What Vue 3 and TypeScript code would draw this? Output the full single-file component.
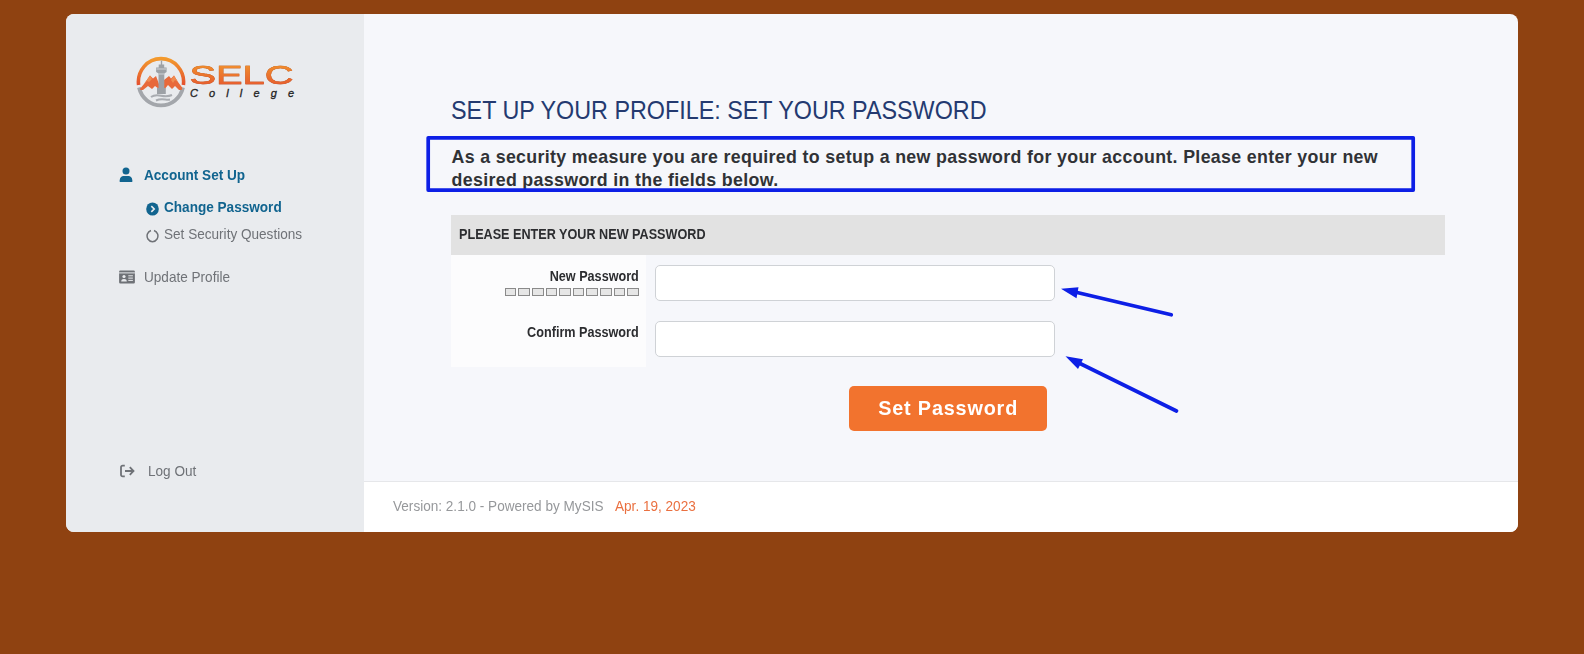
<script setup lang="ts">
import { ref } from 'vue'

const newPassword = ref('')
const confirmPassword = ref('')
const meterSegments = 10
</script>

<template>
  <div class="page">
    <div class="shell">
      <aside class="sidebar">
        <svg class="logo" viewBox="0 0 160 54" role="img" aria-label="SELC College">
          <defs>
            <linearGradient id="flame" x1="0" y1="0" x2="0" y2="1">
              <stop offset="0" stop-color="#f39a2d" />
              <stop offset="1" stop-color="#e4502f" />
            </linearGradient>
            <clipPath id="disc"><circle cx="25" cy="26.5" r="22" /></clipPath>
          </defs>
          <path d="M2.6 29A22.6 23.3 0 1 1 47.4 29" fill="none" stroke="url(#flame)" stroke-width="3.6" />
          <path d="M3 31.5A22.6 23.3 0 0 0 47 31.5" fill="none" stroke="#a3a6ab" stroke-width="3.8" />
          <g clip-path="url(#disc)">
            <path d="M3 34L8 28L14 19.5L17 22.5L20 20L23 28V33L19 30L16 33L12 30L7 34Z" fill="#e8693a" />
            <path d="M28 24L33 20L35 22.5L38 19.5L42 26L48 34H43L39 30L36 33L32 29L28 34Z" fill="#e8693a" />
            <path d="M8 28L14 19.5L16 23L13 26L11 25Z M35 24L38 19.5L42 26L39 24L37 27Z" fill="#f08b50" />
          </g>
          <path d="M24.8 4.5h1.400v4h2v3h2.400v4.500l-2.300 1.500v14.500h1.500V38H21v-6h1.500V17.500l-2.400-1.500v-4.500h2.600v-3h2.100z" fill="#9da1a6" />
          <path d="M20.500 13h9.600M22.500 18h5.500" stroke="#dcdfe3" stroke-width="0.800" />
          <path d="M15 41c7-5 12 2 21-2M20 44.500c6-3 10 0 14-1" fill="none" stroke="#a9acb1" stroke-width="2" />
          <text class="wordmark" x="53.500" y="28.300" textLength="104" lengthAdjust="spacingAndGlyphs">SELC</text>
          <text class="tagline" x="54" y="40.600" textLength="104" lengthAdjust="spacing">College</text>
        </svg>

        <nav class="nav">
          <a class="item item--active">
            <svg class="icon" viewBox="0 0 14 15">
              <circle cx="7" cy="4" r="3.500" />
              <path d="M.7 15v-1.700C.7 10.700 2.400 9 4.600 9h4.800c2.200 0 3.900 1.700 3.900 4.300V15z" />
            </svg>
            <span class="label">Account Set Up</span>
          </a>
          <a class="item item--sub item--active">
            <svg class="dot" viewBox="0 0 13 14">
              <ellipse cx="6.500" cy="7" rx="6.300" ry="6.600" />
              <path d="M5.300 4.200L8.200 7L5.300 9.800" fill="none" stroke="#e9ebee" stroke-width="1.600" />
            </svg>
            <span class="label">Change Password</span>
          </a>
          <a class="item item--sub">
            <svg class="dot" viewBox="0 0 13 14">
              <path d="M8 1.500A5.400 5.700 0 1 1 5 1.500" fill="none" stroke="currentColor" stroke-width="1.500" />
            </svg>
            <span class="label">Set Security Questions</span>
          </a>
          <a class="item item--profile">
            <svg class="card" viewBox="0 0 16 14">
              <path d="M1.300 .5h13.400a1.200 1.200 0 0 1 1.200 1.200v10.600a1.200 1.200 0 0 1-1.200 1.200H1.300A1.200 1.200 0 0 1 .1 12.300V1.700A1.200 1.200 0 0 1 1.300 .5z" />
              <path d="M.1 2.900h15.800M9.300 5.800h4.600M9.300 8.100h4.600M9.300 10.400h4.600" stroke="#e9ebee" stroke-width="1" />
              <circle cx="5" cy="6.500" r="1.600" fill="#e9ebee" />
              <path d="M2.200 11.600c0-2 1-2.700 2.800-2.700s2.800.7 2.800 2.700z" fill="#e9ebee" />
            </svg>
            <span class="label">Update Profile</span>
          </a>
        </nav>

        <a class="item logout">
          <svg class="card" viewBox="0 0 16 14">
            <path d="M5.800 1.700H3.600a1.600 1.600 0 0 0-1.600 1.600v7.400a1.600 1.600 0 0 0 1.600 1.600h2.200M6 7h8.300M10.800 3.200L14.500 7l-3.700 3.800" fill="none" stroke="currentColor" stroke-width="1.800" />
          </svg>
          <span class="label">Log Out</span>
        </a>
      </aside>

      <div class="main">
        <main class="content">
          <h1 class="title"><span class="title-text">SET UP YOUR PROFILE: SET YOUR PASSWORD</span></h1>
          <p class="notice">
            As a security measure you are required to setup a new password for your account. Please enter your new<br />
            desired password in the fields below.
          </p>
          <form class="form" @submit.prevent>
            <h2 class="form-head"><span class="form-text">PLEASE ENTER YOUR NEW PASSWORD</span></h2>
            <div class="row">
              <div class="row-label">
                <label class="form-text form-text--right" for="new-password">New Password</label>
                <div class="meter"><i v-for="n in meterSegments" :key="n" class="segment"></i></div>
              </div>
              <input id="new-password" v-model="newPassword" class="field" type="password" />
            </div>
            <div class="row">
              <div class="row-label">
                <label class="form-text form-text--right" for="confirm-password">Confirm Password</label>
              </div>
              <input id="confirm-password" v-model="confirmPassword" class="field" type="password" />
            </div>
            <button class="submit" type="submit"><span class="submit-text">Set Password</span></button>
          </form>
        </main>
        <footer class="footer">
          <span class="version label">Version: 2.1.0 - Powered by MySIS</span>
          <span class="date label">Apr. 19, 2023</span>
        </footer>
      </div>
    </div>

    <svg class="markup" viewBox="0 0 1584 654">
      <g fill="none" stroke="#0d1fe6" stroke-width="3.700" stroke-linecap="round" stroke-linejoin="round">
        <rect x="428.200" y="137.800" width="985" height="52.300" />
        <path d="M1075 292L1171.300 314.800M1078 362.500L1176.500 411" />
      </g>
      <path d="M1061 288.700L1078.500 287.300L1076.500 298.200ZM1065.500 356.200L1083 359.300L1078 369Z" fill="#0d1fe6" />
    </svg>
  </div>
</template>

<style>
body {
  background: #8f4211;
}
</style>

<style scoped>
.page {
  box-sizing: border-box;
  height: 654px;
  padding: 14px 66px 0;
  overflow: hidden;
  background: #8f4211;
  font-family: "Liberation Sans", Arial, sans-serif;
}
.shell {
  display: flex;
  height: 517.500px;
  border-radius: 8px;
  overflow: hidden;
  background: #f6f7fb;
}
.sidebar {
  display: flex;
  flex-direction: column;
  box-sizing: border-box;
  width: 298px;
  flex: none;
  padding: 41.500px 0 0 52.500px;
  background: #e9ebee;
}
.logo {
  display: block;
  width: 160px;
  height: 54px;
  margin-left: 17.500px;
}
.wordmark {
  font-family: "Liberation Sans", Arial, sans-serif;
  font-size: 26px;
  fill: url(#flame);
  stroke: url(#flame);
  stroke-width: 0.500px;
  filter: drop-shadow(0.500px 0.800px 0 #9a4a28);
}
.tagline {
  font-size: 11px;
  font-style: italic;
  fill: #222;
  stroke: #222;
  stroke-width: 0.300px;
}
.nav {
  margin-top: 51.500px;
}
.item {
  display: flex;
  align-items: center;
  height: 27px;
  color: #6f7277;
  fill: currentColor;
}
.item--active {
  color: #11648f;
  font-weight: 700;
}
.item--sub {
  padding-left: 27px;
}
.item--active + .item--sub {
  margin-top: 5.500px;
}
.item--active.item--sub + .item--sub {
  margin-top: 0;
}
.item--profile {
  margin-top: 15.500px;
}
.logout {
  margin-top: 167.500px;
}
.icon {
  width: 14px;
  height: 15px;
  margin-right: 11px;
}
.dot {
  width: 13px;
  height: 14px;
  margin: 4px 5.600px 0 0;
}
.card {
  width: 16px;
  height: 14px;
  margin-right: 9px;
}
.logout .card {
  margin-right: 13px;
}
.label {
  display: inline-block;
  font-size: 15px;
  line-height: 18px;
  white-space: nowrap;
  transform: scaleX(0.905);
  transform-origin: left center;
}
.main {
  display: flex;
  flex-direction: column;
  flex: 1;
  min-width: 0;
}
.content {
  box-sizing: border-box;
  height: 467px;
  padding: 80px 73px 0 87.300px;
}
.title {
  margin: 0;
  font-size: 25.500px;
  font-weight: 400;
  line-height: 30px;
  color: #243a70;
}
.title-text {
  display: inline-block;
  white-space: nowrap;
  transform: translateY(0.500px) scaleX(0.915);
  transform-origin: left center;
}
.notice {
  width: max-content;
  margin: 20.500px 0 0;
  font-size: 18.400px;
  font-weight: 700;
  line-height: 23px;
  letter-spacing: 0.345px;
  white-space: nowrap;
  color: #303236;
  transform: translate(0.500px, 0.300px) scaleX(0.967);
  transform-origin: left center;
}
.form {
  margin-top: 24px;
}
.form-head {
  display: flex;
  align-items: center;
  height: 40px;
  margin: 0;
  padding: 0 0 2px 8.200px;
  box-sizing: border-box;
  background: #e2e2e2;
}
.form-text {
  display: inline-block;
  font-size: 14px;
  font-weight: 700;
  line-height: 16px;
  white-space: nowrap;
  color: #2c2d30;
  transform: scaleX(0.902);
  transform-origin: left center;
}
.form-text--right {
  transform-origin: right center;
}
.row {
  display: flex;
  height: 56px;
}
.row-label {
  display: flex;
  flex-direction: column;
  align-items: flex-end;
  box-sizing: border-box;
  width: 194.500px;
  padding: 13.500px 7px 0 0;
  background: #fcfcfd;
}
.meter {
  display: flex;
  gap: 2px;
  margin-top: 4px;
}
.segment {
  box-sizing: border-box;
  width: 11.600px;
  height: 8px;
  border: 1px solid #8a8a8a;
  background: #e6e6e6;
}
.field {
  box-sizing: border-box;
  width: 400px;
  height: 36px;
  margin: 10px 0 0 9px;
  padding: 0 12px;
  border: 1px solid #cfd2d6;
  border-radius: 5px;
  outline: none;
  background: #fff;
}
.submit {
  display: block;
  width: 198px;
  height: 44.500px;
  margin: 19.500px 0 0 398px;
  padding: 0;
  border: 0;
  border-radius: 5px;
  background: #f2732e;
}
.submit-text {
  display: inline-block;
  font-family: "Liberation Sans", Arial, sans-serif;
  font-size: 21px;
  font-weight: 700;
  letter-spacing: 0.880px;
  white-space: nowrap;
  color: #fff;
  transform: scaleX(0.943);
}
.footer {
  display: flex;
  align-items: center;
  flex: 1;
  padding: 0 0 1.500px 29px;
  border-top: 1px solid #e6e7ea;
  background: #fff;
}
.version {
  width: 222px;
  color: #96989b;
}
.date {
  color: #ea7040;
}
.markup {
  position: absolute;
  top: 0;
  left: 0;
  width: 1584px;
  height: 654px;
  pointer-events: none;
}
</style>
